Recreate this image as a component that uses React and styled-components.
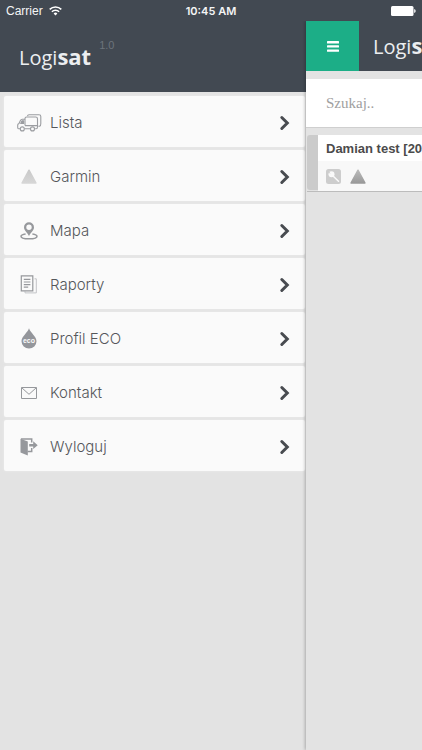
import React from "react";
import styled, { createGlobalStyle } from "styled-components";

const dark = "#424952";
const sans = '"Liberation Sans", Arial, sans-serif';

const GlobalStyle = createGlobalStyle`
  *, *::before, *::after { box-sizing: border-box; }
  body { margin: 0; background: #e3e3e3; font-family: ${sans}; }
  button, input { font: inherit; margin: 0; }
`;

const Screen = styled.div`
  display: flex;
  flex-direction: column;
  min-height: 100vh;
  overflow: hidden;
`;

const StatusBar = styled.header`
  display: grid;
  grid-template-columns: 1fr auto 1fr;
  align-items: center;
  height: 21px;
  padding: 1px 6px 0;
  background: ${dark};
  color: #f4f5f6;
  font-size: 12px;
  line-height: 20px;
`;

const Carrier = styled.div`
  display: flex;
  align-items: center;
  gap: 6px;
`;

const Clock = styled.time`
  font-family: Inter, ${sans};
  font-size: 11px;
  font-weight: 600;
`;

const Battery = styled.svg`
  justify-self: end;
`;

const Panels = styled.div`
  display: flex;
  flex: 1;
`;

const Drawer = styled.nav`
  flex: 0 0 306px;
  display: flex;
  flex-direction: column;
`;

const DrawerHeader = styled.div`
  display: flex;
  align-items: flex-start;
  gap: 8px;
  height: 71px;
  padding: 16px 19px 0;
  background: ${dark};
`;

const Logo = styled.div`
  color: #eceef0;
  font-family: "Open Sans", "Noto Sans", sans-serif;
  font-size: 20px;
  line-height: 38px;
  white-space: nowrap;

  strong { font-size: 22px; font-weight: 700; }
`;

const Version = styled.span`
  color: #6d747c;
  font-size: 11px;
  line-height: 16px;
`;

const Menu = styled.ul`
  display: flex;
  flex-direction: column;
  gap: 3px;
  margin: 0;
  padding: 4px 1px 0 4px;
  list-style: none;
`;

const MenuLink = styled.a`
  display: grid;
  grid-template-columns: 26px 1fr 10px;
  column-gap: 8px;
  align-items: center;
  height: 51px;
  padding: 2px 15px 0 12px;
  border-radius: 2px;
  background: #fafafa;
  box-shadow: 0 0 2px #eee;
  color: #55575a;
  font-family: Inter, ${sans};
  font-size: 15px;
  font-weight: 300;
  line-height: 20px;
  text-decoration: none;
`;

const Icon = styled.svg`
  display: block;
  justify-self: center;
  overflow: visible;
`;

const Main = styled.main`
  flex: 1;
  min-width: 0;
  overflow: hidden;
  background: #e3e3e3;
  clip-path: inset(0 0 0 -8px);
  box-shadow: -1px 0 3px rgba(0, 0, 0, 0.25);
  z-index: 1;
`;

const Toolbar = styled.div`
  display: flex;
  gap: 14px;
  height: 50px;
  background: ${dark};

  ${Logo} { padding-top: 5px; }
`;

const MenuButton = styled.button`
  flex: 0 0 53px;
  display: flex;
  align-items: center;
  justify-content: center;
  border: 0;
  padding: 0;
  background: #1cae87;
`;

const SearchInput = styled.input`
  display: block;
  width: 100%;
  height: 49px;
  margin-top: 8px;
  padding: 0 20px;
  border: 0;
  border-bottom: 1px solid #cfcfcf;
  border-radius: 0;
  background: #fff;
  color: #444;

  && { font-family: "Liberation Serif", serif; font-size: 15px; }
  &::placeholder { color: #a0a0a0; opacity: 1; }
`;

const Card = styled.article`
  display: flex;
  margin: 7px 0 0 1px;
  height: 57px;
  overflow: hidden;
  border-bottom: 1px solid #bcbcbc;
`;

const CardStripe = styled.div`
  flex: 0 0 11px;
  margin-bottom: 1px;
  border-radius: 3px 0 0 3px;
  background: #cbcbcb;
`;

const CardBody = styled.div`
  flex: 1;
  min-width: 0;
  background: #fff;
`;

const CardTitle = styled.h2`
  margin: 0;
  padding: 4px 8px 2px;
  color: #4b4b4b;
  font-size: 13px;
  font-weight: 700;
  line-height: 20px;
  white-space: nowrap;
`;

const CardIcons = styled.div`
  display: flex;
  align-items: center;
  gap: 9px;
  height: 30px;
  padding: 0 8px;
  background: #f8f8f8;
`;

function Triangle({ id, from, to }) {
  return (
    <Icon width="16" height="15" viewBox="0 0 16 15" aria-hidden="true">
      <defs>
        <linearGradient id={id} x1="0" y1="0" x2="0" y2="1">
          <stop offset="0" stopColor={from} />
          <stop offset="1" stopColor={to} />
        </linearGradient>
      </defs>
      <path d="M8 1.2 15 14H1Z" fill={`url(#${id})`} stroke={`url(#${id})`} strokeWidth="1.4" strokeLinejoin="round" />
    </Icon>
  );
}

const Trucks = () => (
  <Icon width="25" height="18" viewBox="0 0 25 18" fill="none" stroke="#9b9da1" strokeWidth="1.1" strokeLinejoin="round" aria-hidden="true">
    <path d="M10.5 2.2Q10.7.8 12 .8h10q1.8 0 1.8 1.8v6.8q0 2.4-1.2 2.9h-1.2" />
    <path d="M8 11.600V4.600Q8 3 9.600 3h9q1.900 0 1.900 1.800v8.200q0 1.800-1.300 1.800h-1.100" />
    <path d="M8 11.600h12.200M8 5.200H5.200Q4 5.200 3.400 6.400L2 9.400q-1.300.5-1.300 1.700v2.300q0 1.400 1.300 1.400h1.200m4.200 0h6" />
    <path d="M3.700 9.400 5 6.800h1.600v2.600Z" fill="#9b9da1" />
    <circle cx="5.300" cy="14.900" r="2" fill="#fafafa" />
    <circle cx="15.500" cy="14.900" r="2" fill="#fafafa" />
  </Icon>
);

const MapPin = () => (
  <Icon width="18" height="18" viewBox="0 0 18 18" fill="none" aria-hidden="true">
    <path d="M5.6 11.9C2.8 12.3 1 13.1 1 14.2c0 1.5 3.5 2.6 8 2.6s8-1.1 8-2.6c0-1.1-1.800-1.900-4.600-2.300" stroke="#96989c" strokeWidth="1.5" />
    <path d="M9 .3a5 5 0 0 0-5 5c0 3.4 3.2 5.1 5 8.8 1.8-3.7 5-5.4 5-8.8a5 5 0 0 0-5-5Zm0 2.3a2.7 2.7 0 1 1 0 5.4 2.7 2.7 0 0 1 0-5.4Z" fill="#96989c" fillRule="evenodd" />
  </Icon>
);

const Reports = () => (
  <Icon width="18" height="19" viewBox="0 0 18 19" fill="none" aria-hidden="true">
    <path d="M14.5 3.8h1.8v14.1H5v-1.5" stroke="#c3c4c7" />
    <path d="M1.3.9h11.5v15H1.3Z" stroke="#96989c" strokeWidth="1.2" />
    <path d="M3.8 4.4h6.6M3.8 7h6.6M3.8 9.6h6.6M3.8 12.2h4.4" stroke="#96989c" strokeWidth="1.2" />
  </Icon>
);

const EcoText = styled.text`
  font-family: ${sans};
  font-size: 7px;
  font-weight: 700;
`;

const EcoDrop = () => (
  <Icon width="16" height="21" viewBox="0 0 16 21" aria-hidden="true">
    <path d="M8 .3C6.6 4.7.5 8.6.5 13.3a7.5 7.2 0 0 0 15 0C15.5 8.6 9.4 4.7 8 .3Z" fill="#94969b" />
    <EcoText x="8" y="14.5" textAnchor="middle" fill="#fafafa">eco</EcoText>
  </Icon>
);

const Envelope = () => (
  <Icon width="16" height="12" viewBox="0 0 16 12" fill="none" stroke="#96989c" strokeWidth="1" aria-hidden="true">
    <path d="M.5.5h15v11H.5ZM.8.8 8 7.300 15.200.8" />
  </Icon>
);

const Logout = () => (
  <Icon width="18" height="18" viewBox="0 0 18 18" aria-hidden="true">
    <path d="M.5.8 7.800 3.500v14L.5 14.600Z" fill="#96989c" />
    <path d="M1 1h10.700v3.500M7.500 13.500h4.200V10" fill="none" stroke="#96989c" strokeWidth="1.5" />
    <path d="M9.200 6h4V3.300l4.500 3.900-4.500 3.900V8.400h-4Z" fill="#96989c" />
  </Icon>
);

const Chevron = () => (
  <Icon width="10" height="14" viewBox="0 0 10 14" fill="none" stroke="#484b50" strokeWidth="3" aria-hidden="true">
    <path d="m1.800 1.500 5.500 5.500-5.500 5.500" strokeLinejoin="miter" strokeLinecap="round" />
  </Icon>
);

const Wifi = () => (
  <Icon width="13" height="10" viewBox="0 0 13 10" fill="none" stroke="#fff" strokeWidth="1.6" aria-label="Wi-Fi">
    <path d="M.7 3.400a8.300 8.300 0 0 1 11.600 0M2.900 5.700a5.100 5.100 0 0 1 7.200 0" />
    <path d="M4.600 7.400a2.700 2.700 0 0 1 3.800 0L6.500 9.400Z" fill="#fff" stroke="none" />
  </Icon>
);

const items = [
  { label: "Lista", icon: <Trucks /> },
  { label: "Garmin", icon: <Triangle id="garmin" from="#c9c9c9" to="#d6d6d6" /> },
  { label: "Mapa", icon: <MapPin /> },
  { label: "Raporty", icon: <Reports /> },
  { label: "Profil ECO", icon: <EcoDrop /> },
  { label: "Kontakt", icon: <Envelope /> },
  { label: "Wyloguj", icon: <Logout /> },
];

export default function App() {
  return (
    <Screen>
      <GlobalStyle />
      <StatusBar>
        <Carrier>Carrier <Wifi /></Carrier>
        <Clock>10:45 AM</Clock>
        <Battery width="25" height="10" viewBox="0 0 25 10" fill="#fff" aria-label="Battery">
          <rect width="22.5" height="10" rx="1.5" />
          <path d="M23.2 3q1.500.3 1.500 2t-1.500 2Z" />
        </Battery>
      </StatusBar>
      <Panels>
        <Drawer>
          <DrawerHeader>
            <Logo>Logi<strong>sat</strong></Logo>
            <Version>1.0</Version>
          </DrawerHeader>
          <Menu>
            {items.map(({ label, icon }) => (
              <li key={label}>
                <MenuLink href="#">
                  {icon}
                  <span>{label}</span>
                  <Chevron />
                </MenuLink>
              </li>
            ))}
          </Menu>
        </Drawer>
        <Main>
          <Toolbar>
            <MenuButton type="button" aria-label="Menu">
              <Icon width="12" height="11" viewBox="0 0 12 11" fill="#fff" aria-hidden="true">
                <rect width="12" height="2.4" rx=".5" />
                <rect y="4.2" width="12" height="2.4" rx=".5" />
                <rect y="8.4" width="12" height="2.4" rx=".5" />
              </Icon>
            </MenuButton>
            <Logo>Logi<strong>sat</strong></Logo>
          </Toolbar>
          <SearchInput type="search" placeholder="Szukaj.." aria-label="Szukaj" />
          <Card>
            <CardStripe />
            <CardBody>
              <CardTitle>Damian test [20</CardTitle>
              <CardIcons>
                <Icon width="15" height="15" viewBox="0 0 15 15" aria-hidden="true">
                  <rect width="15" height="15" rx="2.5" fill="#cdcdcd" />
                  <circle cx="5.5" cy="5.3" r="3" fill="#fafafa" />
                  <path d="m6.5 6.5 6 5.800" stroke="#fafafa" strokeWidth="1.5" strokeLinecap="round" />
                  <path d="M2 2.500 4.200 4.300" stroke="#cdcdcd" strokeWidth="1" />
                </Icon>
                <Triangle id="vehicle" from="#b9b9b9" to="#999" />
              </CardIcons>
            </CardBody>
          </Card>
        </Main>
      </Panels>
    </Screen>
  );
}
